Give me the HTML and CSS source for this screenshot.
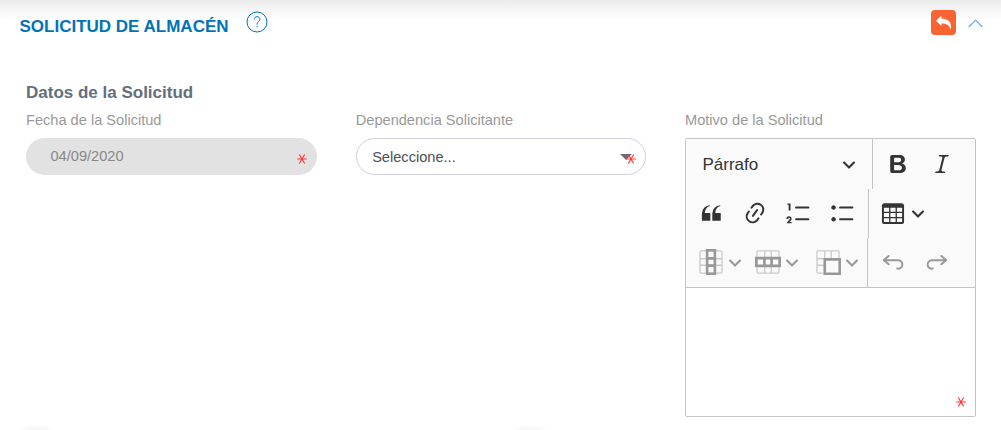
FILE: index.html
```html
<!DOCTYPE html>
<html lang="es">
<head>
<meta charset="utf-8">
<title>Solicitud de Almacén</title>
<link rel="stylesheet" href="styles.css">
</head>
<body>
<svg class="defs" width="0" height="0">
  <symbol id="star" viewBox="0 0 10 10"><path d="M.2 5h9.600M2.300.5l5.400 9M7.700.5l-5.400 9" fill="none" stroke="#ff3838" stroke-width="1.200"/></symbol>
  <symbol id="arrow" viewBox="0 0 10 10"><path fill="currentColor" d="M.941 4.523a.75.75 0 1 1 1.060-1.060l3.006 3.005 3.005-3.005a.75.75 0 1 1 1.060 1.060l-3.549 3.550a.75.75 0 0 1-1.168-.136L.941 4.523z"/></symbol>
</svg>
<header class="header">
  <h1 class="title">SOLICITUD DE ALMACÉN</h1>
  <svg class="help" viewBox="0 0 22 22" fill="none" stroke="#0073b7"><circle cx="11" cy="11" r="10"/><path d="M8.300 8.600c0-1.800 1.100-2.900 2.800-2.900s2.800 1.100 2.800 2.600c0 2.200-2.800 2.300-2.800 4.700v.7M11.100 14.900v1.400"/></svg>
  <button class="back" type="button"><svg width="25" height="25" viewBox="0 0 25 25"><path fill="#fff" d="M5 10.800L10.500 5.600V8.800C15.800 8.800 20 11 20 16.500C20 17.700 19.700 18.700 19.200 19.300C18.800 15.200 15.500 13.400 10.500 13.400V16Z"/></svg></button>
  <svg class="collapse" width="15" height="9" viewBox="0 0 15 9"><path d="M.7 8L7.500 1.200L14.300 8" fill="none" stroke="#45aef2" stroke-width="1.100"/></svg>
</header>
<main class="form">
  <h2 class="subtitle">Datos de la Solicitud</h2>
  <div class="columns">
    <div class="field">
      <label class="label">Fecha de la Solicitud</label>
      <div class="control disabled">04/09/2020<svg class="required"><use href="#star"/></svg></div>
    </div>
    <div class="field">
      <label class="label">Dependencia Solicitante</label>
      <div class="control select">Seleccione...<i class="caret"></i><svg class="required"><use href="#star"/></svg></div>
    </div>
    <div class="field">
      <label class="label">Motivo de la Solicitud</label>
      <div class="editor">
        <div class="toolbar">
          <div class="row">
            <div class="heading"><span class="heading-text">Párrafo</span><svg class="arrow"><use href="#arrow"/></svg></div>
            <span class="separator"></span>
            <div class="tool bold"><svg class="icon" viewBox="0 0 20 20"><path d="M10.187 17H5.773c-.637 0-1.092-.138-1.364-.415-.273-.277-.409-.718-.409-1.323V4.738c0-.617.14-1.062.419-1.332.279-.27.73-.406 1.354-.406h4.680c.69 0 1.288.041 1.793.124.506.083.96.242 1.360.478.341.197.644.447.906.75a3.262 3.262 0 0 1 .808 2.162c0 1.401-.722 2.426-2.167 3.075C15.050 10.175 16 11.315 16 13.010a3.756 3.756 0 0 1-2.296 3.504 6.100 6.100 0 0 1-1.517.377c-.571.073-1.238.11-2 .11zm-.217-6.217H7v4.087h3.069c1.977 0 2.965-.69 2.965-2.072 0-.707-.256-1.220-.768-1.537-.512-.319-1.277-.478-2.296-.478zM7 5.130v3.619h2.606c.729 0 1.292-.067 1.690-.2a1.600 1.600 0 0 0 .91-.765c.165-.267.247-.566.247-.897 0-.707-.26-1.176-.778-1.409-.519-.232-1.310-.348-2.375-.348H7z"/></svg></div>
            <div class="tool"><svg class="icon" viewBox="0 0 20 20"><path d="M9.586 14.633l.021.004c-.036.335.095.655.393.962.082.083.173.15.274.201h1.474a.6.6 0 1 1 0 1.200H5.304a.6.6 0 0 1 0-1.200h1.150c.474-.07.809-.182 1.005-.334.157-.122.291-.32.404-.597l2.416-9.550a1.053 1.053 0 0 0-.281-.823 1.120 1.120 0 0 0-.442-.296H8.150a.6.6 0 0 1 0-1.200h6.443a.6.6 0 1 1 0 1.200h-1.195c-.376.056-.65.155-.823.296-.215.175-.423.439-.623.79l-2.366 9.347z"/></svg></div>
          </div>
          <div class="row lists">
            <div class="tool"><svg class="icon" viewBox="0 0 20 20"><path d="M3 10.423a6.500 6.500 0 0 1 6.056-6.408l.038.67C6.448 5.423 5.354 7.663 5.220 10H9c.552 0 .5.432.5.986v4.511c0 .554-.448.503-1 .503h-5c-.552 0-.5-.449-.5-1.003v-4.574zm8 0a6.500 6.500 0 0 1 6.056-6.408l.038.67c-2.646.739-3.740 2.979-3.873 5.315H17c.552 0 .5.432.5.986v4.511c0 .554-.448.503-1 .503h-5c-.552 0-.5-.449-.5-1.003v-4.574z"/></svg></div>
            <div class="tool"><svg class="icon" viewBox="0 0 20 20"><path d="M11.077 15l.991-1.416a.75.75 0 1 1 1.229.86l-1.148 1.640a.748.748 0 0 1-.217.206 5.251 5.251 0 0 1-8.503-5.955.741.741 0 0 1 .12-.274l1.147-1.639a.75.75 0 1 1 1.228.86L4.933 10.700l.006.003a3.750 3.750 0 0 0 6.132 4.294l.006.004zm5.494-5.335a.748.748 0 0 1-.12.274l-1.147 1.639a.75.75 0 1 1-1.228-.86l.86-1.230a3.750 3.750 0 0 0-6.144-4.301l-.86 1.229a.75.75 0 0 1-1.229-.86l1.148-1.640a.748.748 0 0 1 .217-.206 5.251 5.251 0 0 1 8.503 5.955zm-4.563-2.532a.75.75 0 0 1 .184 1.045l-3.155 4.505a.75.75 0 1 1-1.229-.86l3.155-4.506a.75.75 0 0 1 1.045-.184z"/></svg></div>
            <div class="tool"><svg class="icon" viewBox="0 0 20 20"><path d="M7 5.750c0 .414.336.75.75.75h9.500a.75.75 0 1 0 0-1.500h-9.500a.75.75 0 0 0-.75.75zM3.500 3v5H2V3.700H1v-1h2.500V3zM.343 17.857l2.590-3.257H2.920a.6.6 0 1 0-1.040 0H.302a2 2 0 1 1 3.995 0h-.001c-.048.405-.16.734-.333.988-.175.254-.59.692-1.244 1.312H4.300v1h-4l.043-.043zM7 14.750a.75.75 0 0 1 .75-.75h9.500a.75.75 0 1 1 0 1.500h-9.500a.75.75 0 0 1-.75-.75z"/></svg></div>
            <div class="tool"><svg class="icon" viewBox="0 0 20 20"><path d="M7 5.750c0 .414.336.75.75.75h9.500a.75.75 0 1 0 0-1.500h-9.500a.75.75 0 0 0-.75.75zm-6 0C1 4.784 1.777 4 2.750 4c.966 0 1.750.777 1.750 1.750 0 .966-.777 1.750-1.750 1.750C1.784 7.500 1 6.723 1 5.750zm6 9c0 .414.336.75.75.75h9.500a.75.75 0 1 0 0-1.500h-9.500a.75.75 0 0 0-.75.75zm-6 0c0-.966.777-1.750 1.750-1.750.966 0 1.750.777 1.750 1.750 0 .966-.777 1.750-1.750 1.750-.966 0-1.750-.777-1.750-1.750z"/></svg></div>
            <span class="separator"></span>
            <div class="split table"><svg class="icon" viewBox="0 0 20 20"><path d="M3 6v3h4V6H3zm0 4v3h4v-3H3zm0 4v3h4v-3H3zm5 3h4v-3H8v3zm5 0h4v-3h-4v3zm4-4v-3h-4v3h4zm0-4V6h-4v3h4zm1.500 8a1.500 1.500 0 0 1-1.500 1.500H3A1.500 1.500 0 0 1 1.500 17V4c.222-.863 1.068-1.500 2-1.500h13c.932 0 1.778.637 2 1.500v13zM12 13v-3H8v3h4zm0-4V6H8v3h4z"/></svg><svg class="arrow"><use href="#arrow"/></svg></div>
          </div>
          <div class="row muted">
            <div class="split"><svg class="icon grid" viewBox="0 0 20 20"><path class="faint" d="M2.500 1.500h15a1 1 0 0 1 1 1v15a1 1 0 0 1-1 1h-15a1 1 0 0 1-1-1v-15a1 1 0 0 1 1-1zM1.500 7.500h17M1.500 12.500h17"/><path class="strong" d="M7 1h6v18H7zM7 7.200h6M7 12.800h6"/></svg><svg class="arrow"><use href="#arrow"/></svg></div>
            <div class="split rows"><svg class="icon grid" viewBox="0 0 20 20"><path class="faint" d="M2.500 1.500h15a1 1 0 0 1 1 1v15a1 1 0 0 1-1 1h-15a1 1 0 0 1-1-1v-15a1 1 0 0 1 1-1zM7.500 1.500v17M12.500 1.500v17"/><path class="strong" d="M1 7h18v6H1zM7.200 7v6M12.800 7v6"/></svg><svg class="arrow"><use href="#arrow"/></svg></div>
            <div class="split merge"><svg class="icon grid" viewBox="0 0 20 20"><path class="faint" d="M6 18.500H2.500a1 1 0 0 1-1-1v-15a1 1 0 0 1 1-1h15a1 1 0 0 1 1 1V7M7.500 1.500v6M12.500 1.500v6M1.500 7.500H7M1.500 12.500H7"/><path class="strong" d="M7.500 8H19v11H7.500z"/></svg><svg class="arrow"><use href="#arrow"/></svg></div>
            <span class="separator"></span>
            <div class="tool undo"><svg class="icon" viewBox="0 0 20 20"><path d="M5.042 9.367l2.189 1.837a.75.75 0 0 1-.965 1.149l-3.788-3.180a.747.747 0 0 1-.21-.284.75.75 0 0 1 .17-.945L6.230 4.762a.75.75 0 1 1 .964 1.150L4.863 7.866h8.917A.75.75 0 0 1 14 7.900a4 4 0 1 1-1.477 7.718l.344-1.489a2.500 2.500 0 1 0 1.094-4.730l.008-.032H5.042z"/></svg></div>
            <div class="tool"><svg class="icon flip" viewBox="0 0 20 20"><path d="M5.042 9.367l2.189 1.837a.75.75 0 0 1-.965 1.149l-3.788-3.180a.747.747 0 0 1-.21-.284.75.75 0 0 1 .17-.945L6.230 4.762a.75.75 0 1 1 .964 1.150L4.863 7.866h8.917A.75.75 0 0 1 14 7.900a4 4 0 1 1-1.477 7.718l.344-1.489a2.500 2.500 0 1 0 1.094-4.730l.008-.032H5.042z"/></svg></div>
          </div>
        </div>
        <div class="content"><svg class="required"><use href="#star"/></svg></div>
      </div>
    </div>
  </div>
</main>
<footer class="shadows"><i class="blob"></i><i class="blob"></i></footer>
</body>
</html>
```
FILE: styles.css
```css
* { box-sizing: border-box; }
body {
  margin: 0;
  height: 430px;
  overflow: hidden;
  display: flex;
  flex-direction: column;
  background: linear-gradient(#ececec, #fff 20px) no-repeat #fff;
  font-family: "Liberation Sans", Arial, sans-serif;
}
svg { display: block; flex: none; }
.defs { position: absolute; }
.header { flex: none; height: 50px; display: flex; align-items: flex-start; padding: 10px 18px 0 19.500px; }
.title { margin: 7px 0 0; font-size: 17px; line-height: 20px; color: #0073b7; white-space: nowrap; }
.help { width: 22px; height: 22px; margin: 1.400px 0 0 17px; }
.back { width: 25px; height: 25px; margin-left: auto; padding: 0; border: 0; border-radius: 4px; background: #fa6432; }
.collapse { margin: 9px 0 0 12px; }
.form { flex: 1; padding: 33px 25px 0 26px; }
.subtitle { margin: 0; font-size: 17px; line-height: 20px; color: #626f7d; }
.columns { display: grid; grid-template-columns: 290.500px 290px 291px; gap: 39.250px; margin-top: 8px; }
.label { display: block; height: 27px; font-size: 14.600px; line-height: 18px; color: #999; white-space: nowrap; }
.control { position: relative; height: 37px; border-radius: 19px; font-size: 14.600px; line-height: 37px; }
.disabled { background: #e2e2e2; padding-left: 24.500px; color: #888; }
.select { border: 1px solid #cdd0dc; padding-left: 15.400px; line-height: 36px; color: #495057; }
.required { position: absolute; right: 10px; top: 16px; width: 10px; height: 10px; }
.select .required { right: 9px; top: 15px; }
.caret { position: absolute; right: 13px; top: 15px; border: 6px solid transparent; border-top: 6px solid #66707a; border-bottom: 0; }
.editor { height: 279px; border: 1px solid #c4c4c4; border-radius: 2px; }
.toolbar { height: 149px; background: #fafafa; border-bottom: 1px solid #c4c4c4; color: #333; display: grid; grid-template-rows: 50px 49px 49px; }
.row { display: flex; align-items: center; }
.heading { width: 186px; padding: 0 16px 0 16.500px; display: flex; align-items: center; justify-content: space-between; font-size: 17px; line-height: 20px; }
.heading-text { padding-top: 2px; }
.separator { width: 1px; align-self: stretch; background: #c4c4c4; }
.tool { width: 44px; padding-left: 9px; flex: none; }
.bold { margin-left: 2.500px; }
.icon { width: 26px; height: 26px; fill: currentColor; }
.lists { padding-left: 2.700px; }
.lists .separator { margin-left: 3.300px; }
.split { display: flex; align-items: center; gap: 4px; }
.lists .tool, .lists .split, .muted .tool, .muted .split { padding-bottom: 2px; }
.arrow { width: 14px; height: 14px; }
.table { margin-left: 11.300px; gap: 5px; }
.muted { color: #989898; padding-left: 11.700px; }
.rows { margin-left: 13.700px; }
.merge { margin-left: 16px; }
.muted .separator { margin-left: 8px; }
.undo { margin-left: 3px; }
.flip { transform: scaleX(-1); }
.grid { fill: none; overflow: visible; }
.faint { stroke: #cacaca; stroke-width: 1; }
.strong { stroke: #989898; stroke-width: 2; }
.content { position: relative; height: 128px; }
.content .required { right: 9.500px; top: 109px; }
.shadows { height: 7px; display: flex; gap: 452px; padding: 1px 0 0 15px; flex: none; overflow: hidden; }
.blob { width: 42px; height: 20px; flex: none; background: radial-gradient(closest-side, #f0f0f0, #fff); }
```
